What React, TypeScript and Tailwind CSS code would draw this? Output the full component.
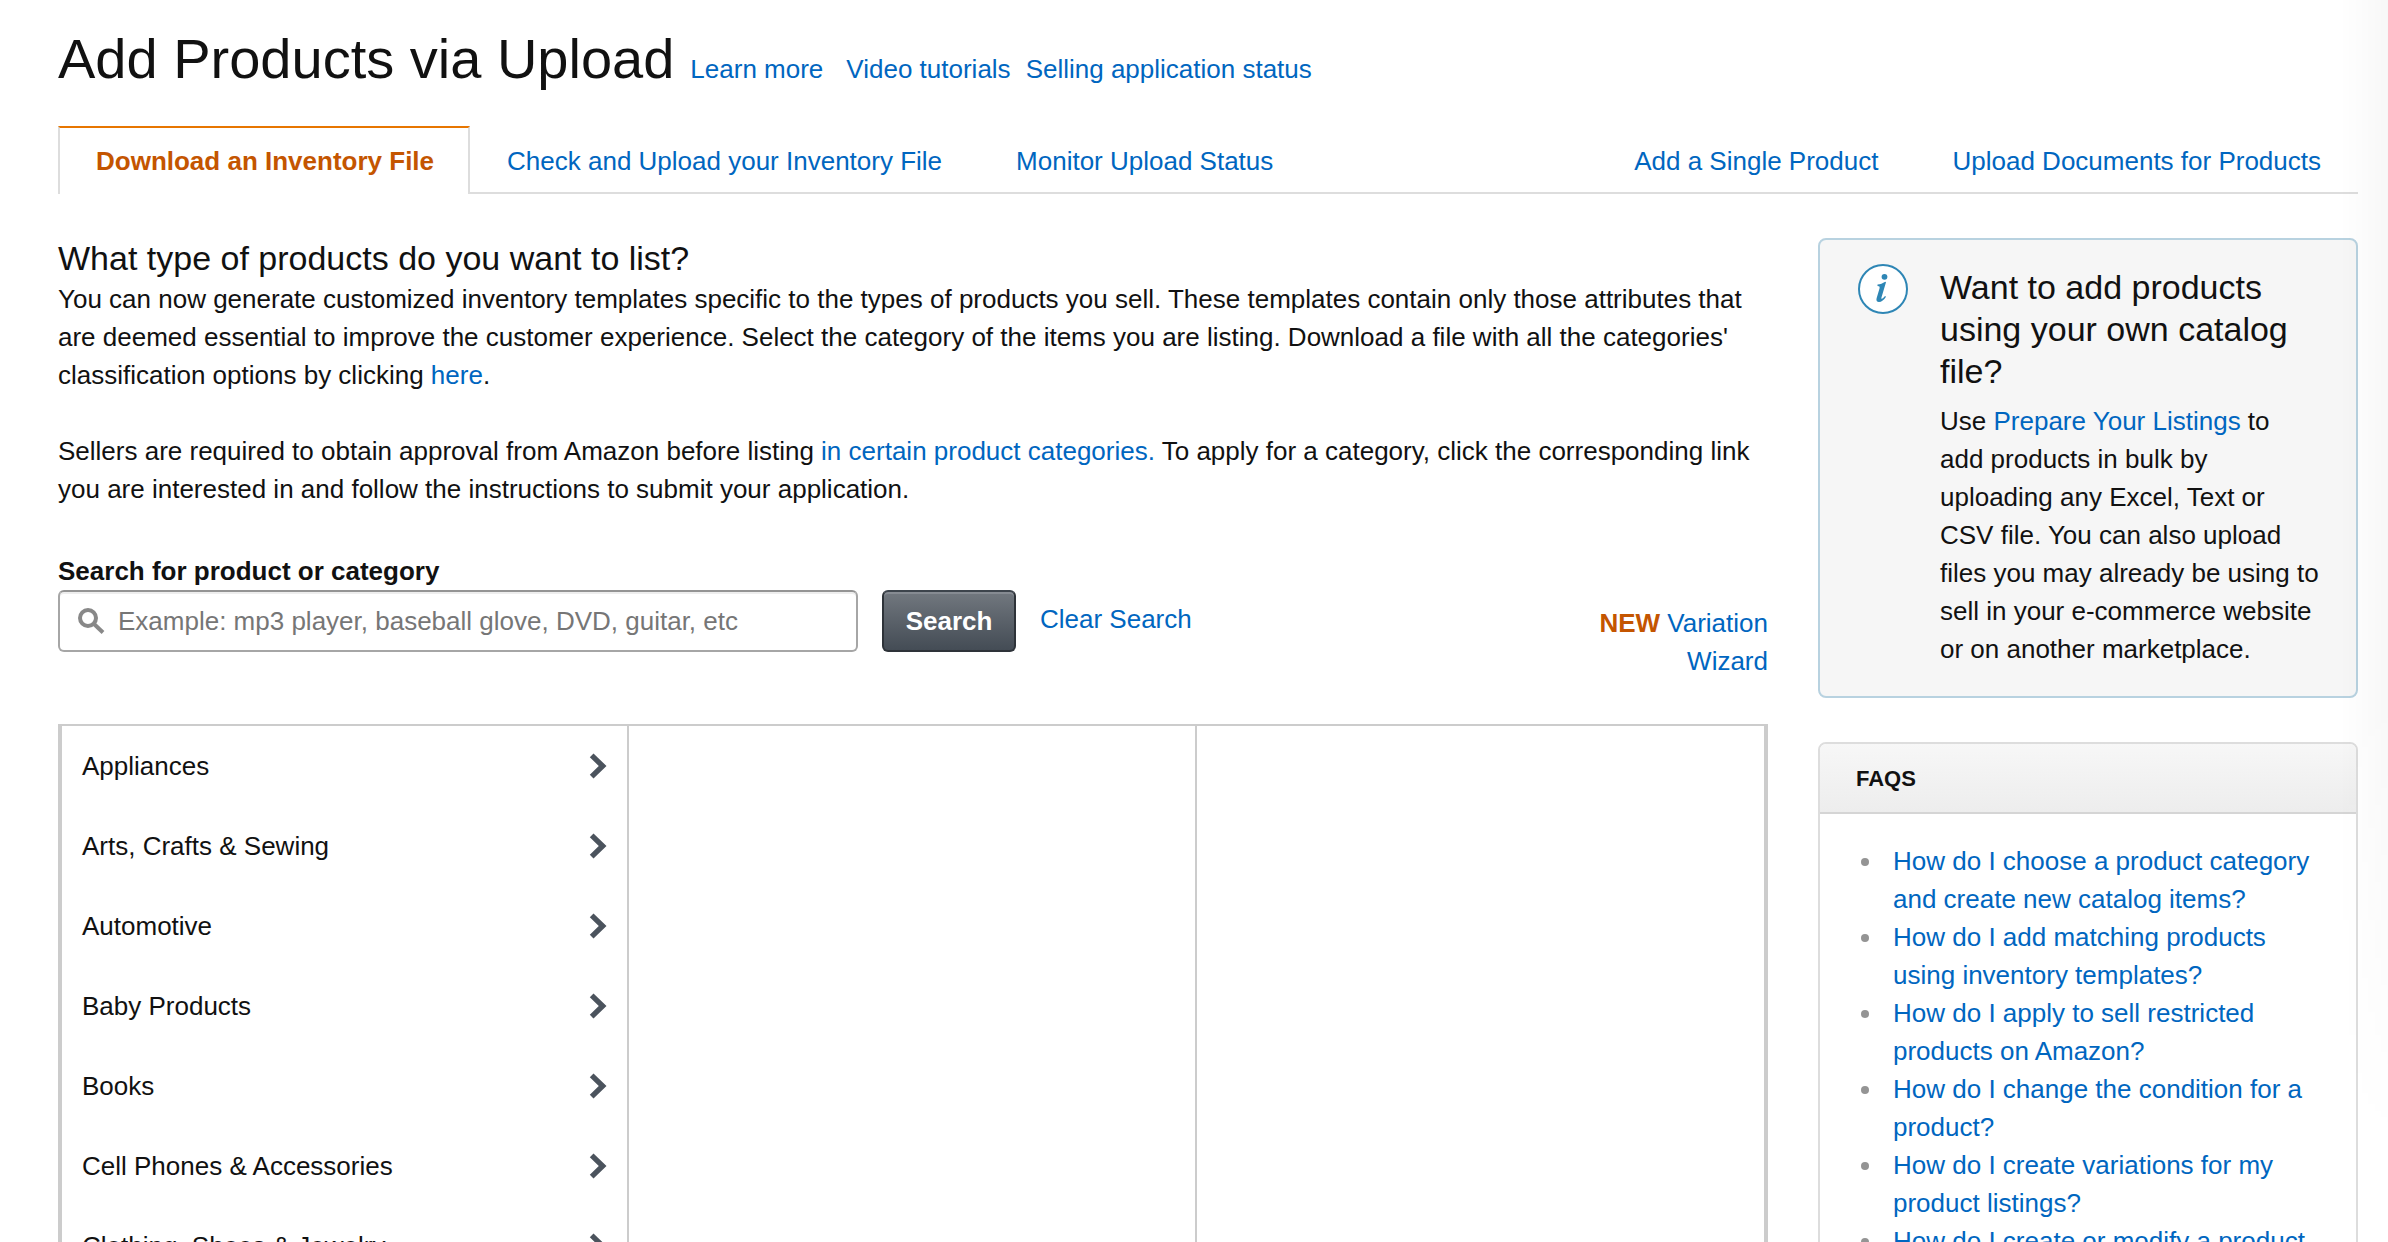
import type { ReactNode } from 'react';

const categories = [
  'Appliances',
  'Arts, Crafts & Sewing',
  'Automotive',
  'Baby Products',
  'Books',
  'Cell Phones & Accessories',
  'Clothing, Shoes & Jewelry',
];

const faqs = [
  'How do I choose a product category and create new catalog items?',
  'How do I add matching products using inventory templates?',
  'How do I apply to sell restricted products on Amazon?',
  'How do I change the condition for a product?',
  'How do I create variations for my product listings?',
  'How do I create or modify a product listing?',
];

function Link({ children }: { children: ReactNode }) {
  return (
    <a href="#" className="text-[#0066c0] hover:underline">
      {children}
    </a>
  );
}

function Tab({ children, active = false }: { children: ReactNode; active?: boolean }) {
  return (
    <a
      href="#"
      className={
        active
          ? '-mb-0.5 border-x-2 border-t-2 border-x-[#ddd] border-t-[#e77600] bg-white pt-[14px] pr-[34px] pb-[14px] pl-9 font-bold text-[#c45500]'
          : 'px-[37px] pt-4 pb-3 text-[#0066c0]'
      }
    >
      {children}
    </a>
  );
}

function Chevron() {
  return (
    <svg viewBox="0 0 18 26" className="h-[26px] w-[18px]" aria-hidden="true">
      <path d="M4.5 0.5 17.5 13 4.5 25.5 0.8 21.8 9.8 13 0.8 4.2Z" fill="#4b535d" />
    </svg>
  );
}

function SearchIcon() {
  return (
    <svg viewBox="0 0 28 28" className="h-7 w-7" fill="none" stroke="#888" aria-hidden="true">
      <circle cx="10" cy="11" r="8" strokeWidth="4" />
      <path d="M15.5 16.500 25 25.500" strokeWidth="4" />
    </svg>
  );
}

function InfoIcon() {
  return (
    <svg viewBox="0 0 50 50" className="h-[50px] w-[50px] shrink-0" aria-hidden="true">
      <circle cx="25" cy="25" r="24" fill="#fff" stroke="#2e86b5" strokeWidth="2" />
      <circle cx="26.5" cy="12.800" r="2.900" fill="#2e86b5" />
      <path
        d="M19.500 20.500c3-.3 5-1.200 7.800-2.800l.7.500-4.600 15.500c-.3 1 .3 1.300 1 .8.9-.6 1.700-1.500 2.600-2.600l1 .8c-2 3.200-4.500 5.300-7 5.300-2.200 0-3-1.500-2.400-3.700l2.900-9.900c.4-1.600.1-2.300-2-2.300z"
        fill="#2e86b5"
      />
    </svg>
  );
}

export default function App() {
  return (
    <div className="relative h-screen overflow-hidden bg-white pr-[30px] pl-[58px] font-['Liberation_Sans',Arial,sans-serif] text-[26px] leading-[38px] text-[#111]">
      <header className="flex items-baseline pt-[25px]">
        <h1 className="mr-4 text-[56px] leading-[67px]">Add Products via Upload</h1>
        <nav className="flex gap-[15px]">
          <span className="mr-2">
            <Link>Learn more</Link>
          </span>
          <Link>Video tutorials</Link>
          <Link>Selling application status</Link>
        </nav>
      </header>

      <nav className="mt-[34px] flex items-end border-b-2 border-[#ddd]">
        <Tab active>Download an Inventory File</Tab>
        <Tab>Check and Upload your Inventory File</Tab>
        <Tab>Monitor Upload Status</Tab>
        <div className="ml-auto flex">
          <Tab>Add a Single Product</Tab>
          <Tab>Upload Documents for Products</Tab>
        </div>
      </nav>

      <div className="mt-11 flex items-start gap-[50px]">
        <main className="min-w-0 flex-1">
          <h2 className="mb-0.5 text-[34px] leading-10">What type of products do you want to list?</h2>
          <p>
            You can now generate customized inventory templates specific to the types of products you sell. These
            templates contain only those attributes that are deemed essential to improve the customer experience.
            Select the category of the items you are listing. Download a file with all the categories'
            classification options by clicking <Link>here</Link>.
          </p>
          <p className="mt-[38px]">
            Sellers are required to obtain approval from Amazon before listing{' '}
            <Link>in certain product categories.</Link> To apply for a category, click the corresponding link you are
            interested in and follow the instructions to submit your application.
          </p>

          <form className="mt-11" onSubmit={(e) => e.preventDefault()}>
            <label htmlFor="search" className="block font-bold">
              Search for product or category
            </label>
            <div className="flex items-start">
              <div className="flex h-[62px] w-[800px] items-center gap-3 rounded-md border-2 border-[#a6a6a6] border-t-[#949494] px-[18px] shadow-[inset_0_2px_0_#eee]">
                <SearchIcon />
                <input
                  id="search"
                  type="text"
                  placeholder="Example: mp3 player, baseball glove, DVD, guitar, etc"
                  className="min-w-0 flex-1 outline-none placeholder:text-[#767676]"
                />
              </div>
              <button
                type="submit"
                className="ml-6 h-[62px] w-[134px] rounded-md border-2 border-[#2e3339] border-t-[#3d444c] bg-linear-to-b from-[#72787f] to-[#444c55] font-bold text-white shadow-[inset_0_2px_0_#868b92]"
              >
                Search
              </button>
              <a href="#" className="mt-[10px] ml-6 text-[#0066c0]">
                Clear Search
              </a>
              <a href="#" className="mt-[14px] ml-auto w-[200px] text-right text-[#0066c0]">
                <b className="text-[#c45500]">NEW</b> Variation Wizard
              </a>
            </div>
          </form>

          <div className="mt-11 grid h-[700px] grid-cols-3 border-x-4 border-t-2 border-[#ccc]">
            <ul className="border-r-2 border-[#ccc]">
              {categories.map((name) => (
                <li key={name}>
                  <button type="button" className="flex h-20 w-full items-center justify-between pr-5 pl-5 text-left">
                    {name}
                    <Chevron />
                  </button>
                </li>
              ))}
            </ul>
            <div className="border-r-2 border-[#ccc]" />
            <div />
          </div>
        </main>

        <aside className="w-[540px] shrink-0">
          <section className="flex gap-8 rounded-lg border-2 border-[#b8d2e0] bg-[#f6f6f6] pt-6 pr-8 pb-7 pl-[38px]">
            <InfoIcon />
            <div>
              <h2 className="mt-0.5 mb-[10px] text-[34px] leading-[42px]">
                Want to add products using your own catalog file?
              </h2>
              <p>
                Use <Link>Prepare Your Listings</Link> to add&nbsp;products in bulk by uploading any Excel, Text or
                CSV file. You can also upload files you may already be using to sell in your e-commerce website or on
                another marketplace.
              </p>
            </div>
          </section>

          <section className="mt-11 rounded-lg border-2 border-[#ddd]">
            <h2 className="rounded-t-md border-b-2 border-[#d5d5d5] bg-linear-to-b from-[#f7f7f7] to-[#ededed] px-9 pt-[17px] pb-[15px] text-[22px] leading-9 font-bold">
              FAQS
            </h2>
            <ul className="list-none py-7 pr-9 pl-[41px]">
              {faqs.map((q) => (
                <li key={q} className="flex gap-6">
                  <span className="mt-4 h-2 w-2 shrink-0 rounded-full bg-[#949494]" />
                  <Link>{q}</Link>
                </li>
              ))}
            </ul>
          </section>
        </aside>
      </div>

      <div className="pointer-events-none absolute top-0 right-0 h-[1150px] w-12 bg-linear-to-r from-transparent to-black/3 mask-b-from-60%" />
    </div>
  );
}
